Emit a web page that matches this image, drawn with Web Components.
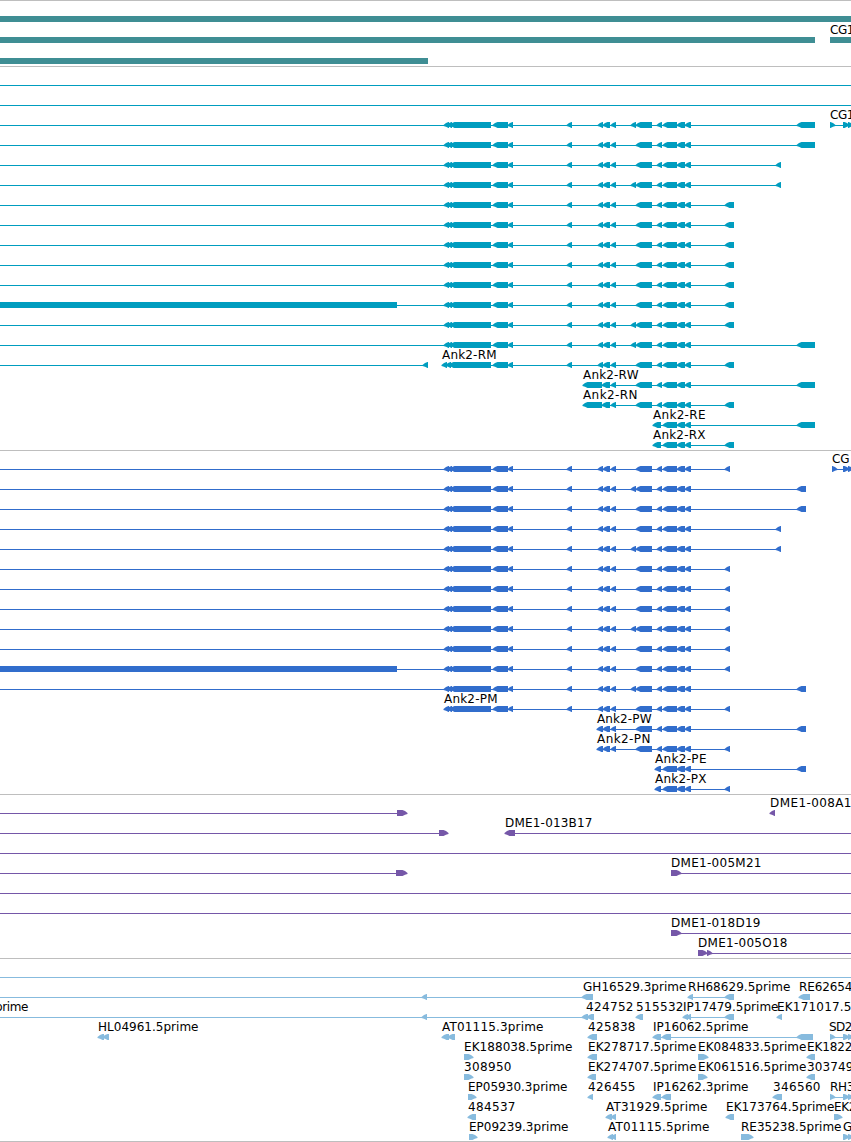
<!DOCTYPE html>
<html lang="en">
<head>
<meta charset="utf-8">
<title>Ank2 region</title>
<style>
  body {
    margin: 0;
    background: #fff;
    overflow: hidden;
  }
</style>
</head>
<body>
<genome-view></genome-view>

<script>
// One lane of a track: labels above, line and exons below
class TrackRow extends HTMLElement {

    constructor() {
        super();
        this.attachShadow({ mode: 'open' });
        this._data = {};
    }

    set data(value) {
        this._data = value;
        this.render();
    }

    get data() {
        return this._data;
    }

    // Arrow head pointing to the left, followed by the body of the exon
    left([a, b], y) {
        const head = Math.min(a + 4.5, b);
        return `<path d="M${a - 0.5} ${y + 3}L${a + 2} ${y + 1}L${head} ${y}H${b}V${y + 6}H${head}L${a + 2} ${y + 4.7}L${a - 0.5} ${y + 4}Z"/>`;
    }

    right([a, b], y) {
        const head = Math.max(b - 4.5, a);
        return `<path d="M${b + 0.5} ${y + 3}L${b - 2} ${y + 1}L${head} ${y}H${a}V${y + 6}H${head}L${b - 2} ${y + 4.7}L${b + 0.5} ${y + 4}Z"/>`;
    }

    render() {
        const { height = 20, lines = [], left = [], right = [], boxes = [], labels = [] } = this._data;
        const y = height === 21 ? 15 : 13;
        const base = height === 21 ? 12 : 10;
        let svg = '';
        for (const [a, b] of lines) {
            svg += `<rect x="${a}" y="${y + 3}" width="${b - a}" height="1"/>`;
        }
        for (const [a, b] of boxes) {
            svg += `<rect x="${a}" y="${y}" width="${b - a}" height="6"/>`;
        }
        for (const exon of left) svg += this.left(exon, y);
        for (const exon of right) svg += this.right(exon, y);
        for (const [x, end, text] of labels) {
            svg += `<text x="${x}" y="${base}" textLength="${end - x - 0.5}">${text}</text>`;
        }
        this.shadowRoot.innerHTML = `<style>
        :host {
            display: block;
            height: ${height}px;
        }
        svg {
            display: block;
            width: 100%;
            height: 100%;
            fill: var(--track-color);
        }
        text {
            fill: #000;
            font: 12px "DejaVu Sans", sans-serif;
        }
        </style>
        <svg>${svg}</svg>`;
    }
}

class TrackPanel extends HTMLElement {

    constructor() {
        super();
        this.attachShadow({ mode: 'open' });
        this.shadowRoot.innerHTML = `<style>
        :host {
            display: block;
            box-sizing: border-box;
            border-top: 1px solid #bebebe;
            padding: 2px 0 1px;
        }
        :host([kind="gene"]) {
            padding: 0 0 2px;
        }
        :host([last]) {
            padding-bottom: 0;
            border-bottom: 1px solid #bebebe;
        }
        </style>
        <slot></slot>`;
    }
}

const WIDTH = 851;
const FULL = { lines: [[0, WIDTH]] };

// Exons shared by the Ank2 transcripts
const HEAD = [[444, 449], [447, 452], [450, 491]];
const MIDDLE = [[493, 508], [508, 513], [567, 572]];
const SMALL = [[598, 603], [603, 610], [611, 616]];
const EXTRA = [631, 636];
const CORE = [[636, 652], [657, 662]];
const TAIL = [[663, 677], [677, 685], [685, 691]];

function transcript(end, extra, more = {}) {
    const left = [...HEAD, ...MIDDLE, ...SMALL, ...CORE, ...TAIL, end];
    if (extra) left.push(EXTRA);
    return { lines: [[0, end[1]]], left, ...more };
}

function partial(label, start, exons, end) {
    return { lines: [[start, end[1]]], left: [...exons, ...TAIL, end], labels: [label] };
}

const A = [797, 815], B = [776, 781], C = [725, 734];
const D = [725, 730], E = [797, 806];

const PANELS = [
    { kind: 'gene', color: '#3f8e94', rows: [
        { height: 21, boxes: [[0, WIDTH]] },
        { height: 21, boxes: [[0, 815], [830, WIDTH]], labels: [[830, 855, 'CG1']] },
        { height: 21, boxes: [[0, 428]] },
    ] },
    { kind: 'transcript', color: '#009dbf', rows: [
        FULL,
        FULL,
        transcript(A, true, { lines: [[0, 815], [830, WIDTH]], right: [[830, 835], [843, 849], [848, 853]], labels: [[830, 855, 'CG1']] }),
        transcript(A),
        transcript(B),
        transcript(B, true),
        transcript(C),
        transcript(C),
        transcript(C),
        transcript(C),
        transcript(C),
        transcript(C, false, { boxes: [[0, 397]] }),
        transcript(C, true),
        transcript(A, true),
        { lines: [[0, 428], [442, 734]], left: [[423, 428], [442, 447], [446, 451], [449, 491], ...MIDDLE, ...SMALL, ...CORE, ...TAIL, C], labels: [[442, 497, 'Ank2-RM']] },
        partial([583, 639, 'Ank2-RW'], 583, [[583, 602], [602, 610], [611, 616], ...CORE], A),
        partial([583, 638, 'Ank2-RN'], 583, [[583, 602], [602, 610], [611, 616], ...CORE], C),
        partial([653, 706, 'Ank2-RE'], 653, [[653, 661]], A),
        partial([653, 706, 'Ank2-RX'], 653, [[653, 661]], C),
    ] },
    { kind: 'protein', color: '#316dcc', rows: [
        transcript(D, false, { lines: [[0, 730], [832, WIDTH]], right: [[832, 837], [843, 849], [848, 853]], labels: [[832, 850, 'CG']] }),
        transcript(E, true),
        transcript(E),
        transcript(B),
        transcript(B, true),
        transcript(D),
        transcript(D),
        transcript(D),
        transcript(D, true),
        transcript(D),
        transcript(D, false, { boxes: [[0, 397]] }),
        transcript(E, true),
        transcript(D, false, { lines: [[444, 730]], labels: [[444, 498, 'Ank2-PM']] }),
        partial([597, 652, 'Ank2-PW'], 597, [[597, 603], ...SMALL.slice(1), ...CORE], E),
        partial([597, 651, 'Ank2-PN'], 597, [[597, 603], ...SMALL.slice(1), ...CORE], D),
        partial([655, 707, 'Ank2-PE'], 655, [[655, 661]], E),
        partial([655, 707, 'Ank2-PX'], 655, [[655, 661]], D),
    ] },
    { kind: 'mrna', color: '#7557a8', rows: [
        { lines: [[0, 407]], right: [[397, 407]], left: [[770, 775]], labels: [[770, 852, 'DME1-008A1']] },
        { lines: [[0, 448], [505, WIDTH]], right: [[439, 448]], left: [[505, 515]], labels: [[505, 593, 'DME1-013B17']] },
        FULL,
        { lines: [[0, 407], [671, WIDTH]], right: [[396, 407], [671, 681]], labels: [[671, 762, 'DME1-005M21']] },
        FULL,
        FULL,
        { lines: [[671, WIDTH]], right: [[671, 681]], labels: [[671, 761, 'DME1-018D19']] },
        { lines: [[698, WIDTH]], right: [[698, 707], [707, 712]], labels: [[698, 788, 'DME1-005O18']] },
    ] },
    { kind: 'est', color: '#87bbde', rows: [
        FULL,
        { lines: [[0, 593], [688, 734]],
          left: [[422, 427], [582, 593], [688, 693], [725, 734], [799, 810]],
          labels: [[583, 687, 'GH16529.3prime'], [688, 791, 'RH68629.5prime'], [799, 853, 'RE62654']] },
        { lines: [[0, 594], [683, 734]],
          left: [[422, 427], [582, 588], [587, 594], [636, 643], [683, 688], [686, 691], [725, 734], [777, 782]],
          labels: [[-5, 29, 'prime'], [586, 634, '424752'], [636, 684, '515532'], [683, 779, 'IP17479.5prime'], [777, 852, 'EK171017.5']] },
        { lines: [[653, 813], [830, WIDTH]],
          left: [[98, 104], [103, 109], [442, 449], [448, 455], [588, 597], [653, 661], [662, 671], [797, 813]],
          right: [[830, 835], [843, 849], [848, 853]],
          labels: [[98, 199, 'HL04961.5prime'], [442, 544, 'AT01115.3prime'], [588, 636, '425838'], [653, 749, 'IP16062.5prime'], [829, 853, 'SD2']] },
        { left: [[588, 597], [807, 815]], right: [[464, 473], [698, 708]],
          labels: [[464, 573, 'EK188038.5prime'], [588, 697, 'EK278717.5prime'], [698, 807, 'EK084833.5prime'], [807, 853, 'EK1822']] },
        { left: [[588, 596], [807, 815]], right: [[464, 473], [698, 707]],
          labels: [[464, 512, '308950'], [588, 697, 'EK274707.5prime'], [698, 807, 'EK061516.5prime'], [807, 854, '303749']] },
        { lines: [[653, 671], [830, WIDTH]],
          left: [[588, 593], [653, 661], [662, 671], [773, 782]],
          right: [[468, 476], [830, 835], [843, 849], [848, 853]],
          labels: [[468, 568, 'EP05930.3prime'], [588, 636, '426455'], [653, 749, 'IP16262.3prime'], [773, 821, '346560'], [830, 855, 'RH3']] },
        { left: [[468, 476], [606, 612], [611, 616], [726, 734]], right: [[834, 842]],
          labels: [[468, 516, '484537'], [606, 708, 'AT31929.5prime'], [726, 835, 'EK173764.5prime'], [834, 857, 'EK2']] },
        { left: [[608, 613], [611, 616]], right: [[469, 477], [741, 753], [843, 849], [848, 853]],
          labels: [[469, 569, 'EP09239.3prime'], [608, 710, 'AT01115.5prime'], [741, 842, 'RE35238.5prime'], [843, 853, 'G']] },
    ] },
];

class GenomeView extends HTMLElement {

    constructor() {
        super();
        this.attachShadow({ mode: 'open' });
    }

    connectedCallback() {
        this.shadowRoot.innerHTML = `<style>
        :host {
            display: flex;
            flex-direction: column;
            width: ${WIDTH}px;
            overflow: hidden;
        }
        </style>`;
        PANELS.forEach((panel, i) => {
            const el = document.createElement('track-panel');
            el.setAttribute('kind', panel.kind);
            el.style.setProperty('--track-color', panel.color);
            if (i === PANELS.length - 1) el.setAttribute('last', '');
            for (const row of panel.rows) {
                const lane = document.createElement('track-row');
                lane.data = row;
                el.append(lane);
            }
            this.shadowRoot.append(el);
        });
    }
}

customElements.define('track-row', TrackRow);
customElements.define('track-panel', TrackPanel);
customElements.define('genome-view', GenomeView);
</script>
</body>
</html>
